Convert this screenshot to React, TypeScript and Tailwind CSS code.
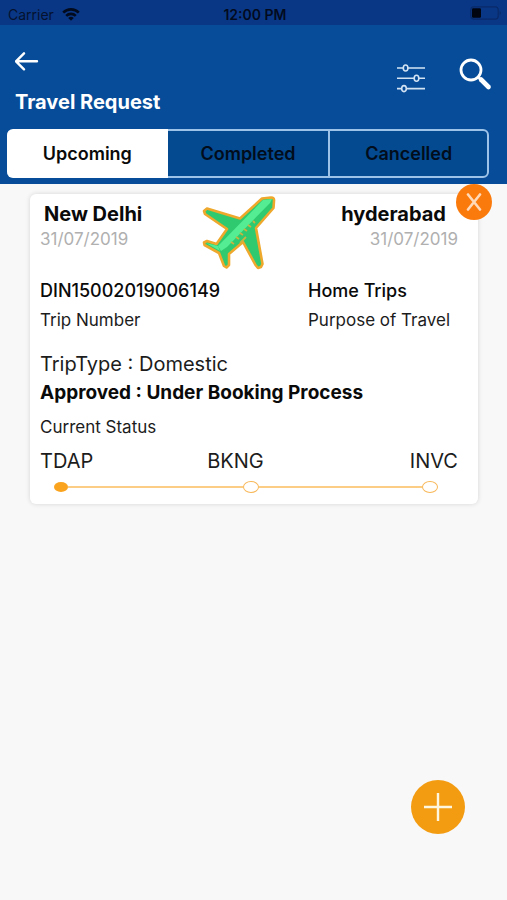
import { useState } from "react";

const tabs = ["Upcoming", "Completed", "Cancelled"];

function StatusBar() {
  return (
    <div className="grid h-[25px] grid-cols-3 items-center bg-[#0a3785] pr-[5px] pl-2 text-sm text-[#04122f]">
      <div className="flex items-center gap-2 pt-1">
        <span>Carrier</span>
        <svg width="18" height="13" viewBox="0 0 18 13" fill="none" stroke="#020b1e" strokeWidth="2.6">
          <path d="M1.2 4.6a11 11 0 0 1 15.6 0" />
          <path d="M4.2 7.9a6.8 6.8 0 0 1 9.6 0" />
          <path d="M9 12.8 6.2 10a4 4 0 0 1 5.6 0z" fill="#020b1e" stroke="none" />
        </svg>
      </div>
      <span className="pt-1 text-center font-semibold text-[#020b1e]">12:00 PM</span>
      <svg className="justify-self-end" width="32" height="14" viewBox="0 0 32 14">
        <rect x="0.8" y="0.8" width="27.4" height="12.4" rx="3" fill="none" stroke="#082a68" strokeWidth="1.2" />
        <rect x="2" y="2.2" width="9" height="9.6" rx="1.2" fill="#000510" />
        <path d="M29.6 4.8c1.6.8 1.6 3.6 0 4.4z" fill="#082a68" />
      </svg>
    </div>
  );
}

function Header({ active, onSelect }: { active: string; onSelect: (tab: string) => void }) {
  return (
    <header className="bg-[#064c98] px-[7px] pb-[6px]">
      <div className="flex items-start justify-between pl-2">
        <div>
          <button type="button" aria-label="Back" className="mt-6 block h-6">
            <svg width="24" height="24" viewBox="0 0 24 24" fill="none" stroke="#fff" strokeWidth="2.4" strokeLinecap="round" strokeLinejoin="round">
              <path d="M22 12.3H1.5M9 4.3l-8 8 8 8" />
            </svg>
          </button>
          <h1 className="mt-[17px] text-xl leading-6 font-bold text-white">Travel Request</h1>
        </div>
        <div className="flex items-start gap-8 pt-8 pr-2">
          <button type="button" aria-label="Filter" className="mt-[6px]">
            <svg width="30" height="30" viewBox="0 0 30 30" fill="none" stroke="#d3e3f4" strokeWidth="1.6">
              <path d="M1 5h6M12 5h17M1 15.3h17M23 15.3h6M1 25.6h4.500M10.500 25.600H29" />
              <ellipse cx="9.600" cy="5" rx="2.300" ry="3" />
              <ellipse cx="20.500" cy="15.300" rx="2.300" ry="3" />
              <ellipse cx="8" cy="25.600" rx="2.300" ry="3" />
            </svg>
          </button>
          <button type="button" aria-label="Search">
            <svg width="34" height="34" viewBox="0 0 34 34" fill="none" stroke="#fff">
              <circle cx="13" cy="13" r="10" strokeWidth="2.800" />
              <path d="M20 20l3 3" strokeWidth="2.400" />
              <path d="M23 22.500l7.500 7.500" strokeWidth="4.600" strokeLinecap="round" />
            </svg>
          </button>
        </div>
      </div>
      <nav className="mt-[15px] mr-[11px] grid h-[49px] grid-cols-3">
        {tabs.map((tab) => (
          <button
            key={tab}
            type="button"
            aria-pressed={tab === active}
            onClick={() => onSelect(tab)}
            className={
              tab === active
                ? "border-y-2 border-white bg-white text-lg font-semibold text-[#0a0a0a] first:rounded-l-md last:rounded-r-md"
                : "border-y-2 border-[#9dc3e8] bg-[#044a90] text-lg font-semibold text-[#020d1c] first:rounded-l-md first:border-l-2 last:rounded-r-md last:border-x-2"
            }
          >
            {tab}
          </button>
        ))}
      </nav>
    </header>
  );
}

function Plane() {
  return (
    <svg width="76" height="76" viewBox="0 0 76 76" strokeLinejoin="round">
      <path
        d="M60 3.500 69 2.500Q72.500 2.500 72 6L71.500 13 54 33 60.500 69 59 72 56 73 53.500 70 41 47 27 59 27 70 24.500 72.500 22 71 17 58 2.500 50 2 47.500 5 46 14.500 49 25 34 3 19 2 16 5 13.500 38 23.500Z"
        fill="#2fc96f"
        stroke="#eea82b"
        strokeWidth="2.600"
      />
      <path d="M61 5 70 4 68 8 25 52 19 56 16 51Z" fill="#55ed93" />
      <path d="M4 48 16 51 18 56Z" fill="#55ed93" />
      <path d="M29 47l3 2M34 42l3 2M38 38l3 2M42 34l3 2M46 30l3 2M51 26l2 2M38 48l6-6" stroke="#c9b440" strokeWidth="1.800" />
    </svg>
  );
}

function Place({ city, date, end }: { city: string; date: string; end?: boolean }) {
  return (
    <div className={end ? "text-right" : ""}>
      <h2 className={end ? "pr-3 text-xl leading-6 font-bold" : "pl-1 text-xl leading-6 font-bold"}>{city}</h2>
      <p className="text-[17px] leading-[26px] text-[#b0b0b0]">{date}</p>
    </div>
  );
}

function Field({ value, label }: { value: string; label: string }) {
  return (
    <div>
      <p className="text-lg leading-6 font-medium">{value}</p>
      <p className="mt-[3px] text-[17px] leading-7 text-[#1c1c1c]">{label}</p>
    </div>
  );
}

function TripCard() {
  return (
    <article className="relative mt-[10px] mr-[29px] ml-[30px] rounded-md bg-white pt-2 pr-5 pb-[11px] pl-[10px] text-[#0a0a0a] shadow-[0_0_5px_rgba(0,0,0,0.14)]">
      <button
        type="button"
        aria-label="Cancel trip"
        className="absolute -top-[10px] -right-[14px] flex size-9 items-center justify-center rounded-full bg-[#fb7a0c]"
      >
        <svg width="18" height="18" viewBox="0 0 18 18" stroke="#ffd9b8" strokeWidth="2.600" strokeLinecap="round">
          <path d="M3 1.500l12 15M15 1.500l-12 15" />
        </svg>
      </button>
      <div className="flex h-[77px] justify-between">
        <Place city="New Delhi" date="31/07/2019" />
        <div className="-mt-[7px] mr-1">
          <Plane />
        </div>
        <Place city="hyderabad" date="31/07/2019" end />
      </div>
      <div className="grid grid-cols-[268px_1fr] whitespace-nowrap">
        <Field value="DIN15002019006149" label="Trip Number" />
        <Field value="Home Trips" label="Purpose of Travel" />
      </div>
      <p className="mt-[15px] text-xl leading-[30px] text-[#1c1c1c]">TripType : Domestic</p>
      <p className="text-[19px] leading-7 font-bold">Approved : Under Booking Process</p>
      <p className="mt-1 text-[17px] leading-8 text-[#1c1c1c]">Current Status</p>
      <div className="mt-1 grid grid-cols-5 text-xl leading-7 text-[#1c1c1c]">
        <span className="col-span-2">TDAP</span>
        <span className="col-span-2">BKNG</span>
        <span className="text-right">INVC</span>
      </div>
      <div className="mt-[6px] mr-5 ml-[14px] flex h-3 items-center">
        <span className="h-[10px] w-[14px] rounded-[50%] bg-[#faa31e]" />
        <span className="h-0.5 flex-15 bg-[#fbcd85]" />
        <span className="h-3 w-4 rounded-[50%] border border-[#f8b757]" />
        <span className="h-0.5 flex-14 bg-[#fbcd85]" />
        <span className="h-3 w-4 rounded-[50%] border border-[#f8b757]" />
      </div>
    </article>
  );
}

export default function App() {
  const [active, setActive] = useState("Upcoming");
  return (
    <div className="min-h-screen bg-[#f8f8f8] font-['Inter','Liberation_Sans',sans-serif]">
      <StatusBar />
      <Header active={active} onSelect={setActive} />
      <main>
        <TripCard />
      </main>
      <button
        type="button"
        aria-label="New travel request"
        className="fixed right-[42px] bottom-[66px] flex size-[54px] items-center justify-center rounded-full bg-[#f39c12]"
      >
        <svg width="28" height="28" viewBox="0 0 28 28" stroke="#fff6e0" strokeWidth="2.400">
          <path d="M0 14h28M14 0v28" />
        </svg>
      </button>
    </div>
  );
}
